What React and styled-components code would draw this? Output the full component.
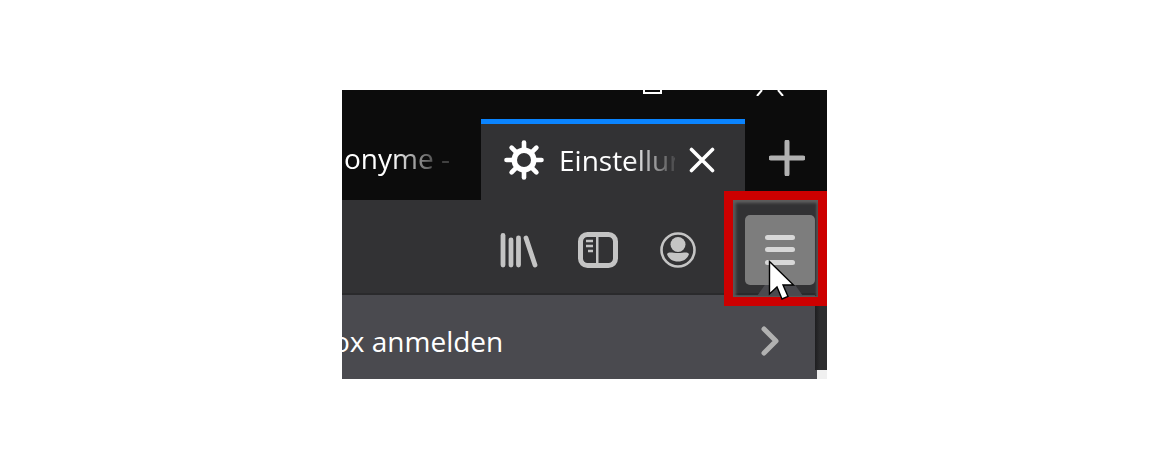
import React from "react";
import styled, { createGlobalStyle } from "styled-components";

const Global = createGlobalStyle`
  html, body { margin: 0; padding: 0; background: #fff; }
  body { font-family: "Open Sans", "Noto Sans", Arial, sans-serif; }
`;
const Page = styled.div`
  width: 1170px; height: 470px; display: flex; justify-content: flex-start;
  align-items: flex-start; padding: 90px 0 0 342px; box-sizing: border-box;
`;
const Frame = styled.div`
  position: relative; width: 485px; height: 289px; overflow: hidden;
  background: #0c0c0c; display: flex; flex-direction: column;
`;
const Caption = styled.div`
  height: 29px; flex: none; display: flex; align-items: flex-start; color: #fff;
  padding-left: 301px;
`;
const MaxGlyph = styled.div`
  width: 19px; height: 4px; box-sizing: border-box; margin-right: 95px;
  border: 2px solid #fff; border-top: 0;
`;
const TabStrip = styled.div`
  height: 81px; flex: none; display: flex; background: #0c0c0c;
`;
const InactiveTab = styled.div`
  width: 139px; flex: none; overflow: hidden; display: flex; justify-content: flex-end;
  align-items: center; padding: 0 31px 3px 0; box-sizing: border-box;
`;
const InactiveLabel = styled.span`
  font-size: 28px; color: #fff; white-space: nowrap; line-height: 76px;
  -webkit-mask-image: linear-gradient(90deg, #000 45%, rgba(0,0,0,.22) 88%);
  mask-image: linear-gradient(90deg, #000 45%, rgba(0,0,0,.22) 88%);
`;
const ActiveTab = styled.div`
  width: 264px; flex: none; box-sizing: border-box; background: #323234;
  border-top: 5px solid #0a84ff; display: flex; align-items: center; padding: 0 0 4px 23px;
`;
const TabLabel = styled.span`
  width: 116px; margin-left: 15px; overflow: hidden; white-space: nowrap;
  font-size: 28px; color: #fff; line-height: 72px; flex: none;
  -webkit-mask-image: linear-gradient(90deg, #000 62%, rgba(0,0,0,.15) 98%);
  mask-image: linear-gradient(90deg, #000 62%, rgba(0,0,0,.15) 98%);
`;
const TabClose = styled.svg`
  margin-left: 14px; flex: none;
`;
const NewTab = styled.div`
  flex: 1; display: flex; align-items: center; justify-content: center; padding: 0 0 4px 2px;
`;
const NavBar = styled.div`
  height: 95px; flex: none; background: #323234; box-sizing: border-box;
  border-bottom: 2px solid #2a2a2c; display: flex; align-items: center; justify-content: flex-end;
  padding: 6px 12px 0 0;
`;
const ToolIcon = styled.svg`
  flex: none; color: #c4c4c4; margin-right: ${p => p.$gap}px;
`;
const MenuButton = styled.div`
  width: 70px; height: 70px; border-radius: 5px; background: #7d7d7d;
  display: flex; flex-direction: column; align-items: center; justify-content: center; gap: 7.5px;
`;
const MenuLine = styled.span`
  width: 30px; height: 5px; border-radius: 3px; background: #d8d8d8;
`;
const Lower = styled.div`
  flex: 1; display: flex; min-height: 0;
`;
const Panel = styled.div`
  width: 473px; flex: none; background: #4a4a4f; display: flex; align-items: center;
  justify-content: space-between; box-sizing: border-box; padding: 0 36px 0 0;
  overflow: hidden;
`;
const PanelLabel = styled.span`
  font-size: 28px; color: #fff; white-space: nowrap; margin-left: -9px; margin-top: 7px;
`;
const Chevron = styled.svg`
  flex: none; margin-top: 8px;
`;
const Side = styled.div`
  flex: 1; display: flex; flex-direction: column;
`;
const SideDark = styled.div`
  height: 75px; flex: none; background: linear-gradient(90deg, #1e1e20 0, #2d2d2f 5px, #2d2d2f 100%);
`;
const SideLight = styled.div`
  flex: 1; background: linear-gradient(90deg, #4a4a4f 0 2px, #f0f0f0 2px);
`;
const Highlight = styled.div`
  position: absolute; left: 382px; top: 101px; width: 103px; height: 115px;
  box-sizing: border-box; border: 9px solid #cc0000;
  box-shadow: inset 0 4px 3px -1px #5e5e5e, inset 4px 0 3px -1px #585858,
    inset -3px 0 2px -1px #505050, inset 0 -2px 1px -1px #5a5a5a;
`;
const NotchArrow = styled.div`
  position: absolute; left: 415px; top: 195px; width: 46px; height: 11px;
  background: #4a4a4f; clip-path: polygon(17% 0, 83% 0, 100% 100%, 0 100%);
`;
const Cursor = styled.svg`
  position: absolute; left: 426px; top: 170px;
`;

const Gear = () => (
  <svg width="40" height="40" viewBox="0 0 40 40" style={{ flex: "none" }}>
    <g stroke="#fff" strokeWidth="4.6" strokeLinecap="round">
      <line x1="20" y1="2.5" x2="20" y2="37.5" />
      <line x1="2.5" y1="20" x2="37.5" y2="20" />
      <line x1="7.6" y1="7.6" x2="32.4" y2="32.4" />
      <line x1="32.4" y1="7.6" x2="7.6" y2="32.4" />
    </g>
    <circle cx="20" cy="20" r="12.5" fill="#fff" />
    <circle cx="20" cy="20" r="7" fill="#323234" />
  </svg>
);

export default function App() {
  return (
    <>
      <Global />
      <Page>
        <Frame>
          <Caption>
            <MaxGlyph />
            <svg width="28" height="6" viewBox="0 0 28 6" style={{ flex: "none", marginLeft: "-1px" }}>
              <path d="M1 6 L6 0 M27 6 L22 0" stroke="#fff" strokeWidth="2" fill="none" />
            </svg>
          </Caption>
          <TabStrip>
            <InactiveTab><InactiveLabel>onyme -</InactiveLabel></InactiveTab>
            <ActiveTab>
              <Gear />
              <TabLabel>Einstellungen</TabLabel>
              <TabClose width="26" height="26" viewBox="0 0 26 26">
                <path d="M2.5 2.5 L23.5 23.5 M23.5 2.5 L2.5 23.5" stroke="#fff" strokeWidth="3.6" strokeLinecap="round" />
              </TabClose>
            </ActiveTab>
            <NewTab>
              <svg width="36" height="36" viewBox="0 0 36 36">
                <path d="M18 2 V34 M2 18 H34" stroke="#b1b1b1" strokeWidth="5" strokeLinecap="round" />
              </svg>
            </NewTab>
          </TabStrip>
          <NavBar>
            <ToolIcon $gap={40} width="38" height="36" viewBox="0 0 38 36">
              <g stroke="currentColor" strokeWidth="4.8" strokeLinecap="round" fill="none">
                <path d="M3 3.5 V33" />
                <path d="M11 8 V33" />
                <path d="M18.5 6 V33" />
                <path d="M26 6 L35 33" />
              </g>
            </ToolIcon>
            <ToolIcon $gap={42} width="40" height="36" viewBox="0 0 40 36">
              <rect x="2.5" y="2.5" width="35" height="31" rx="7" fill="none" stroke="currentColor" strokeWidth="5" />
              <rect x="18" y="3" width="2.5" height="30" fill="currentColor" />
              <path d="M8 9 H15 M8 14 H15 M10 19 H15" stroke="currentColor" strokeWidth="2.4" />
            </ToolIcon>
            <ToolIcon $gap={49} width="36" height="36" viewBox="0 0 36 36">
              <circle cx="18" cy="18" r="16.5" fill="none" stroke="currentColor" strokeWidth="2.6" />
              <circle cx="18" cy="12.5" r="7.5" fill="currentColor" />
              <path d="M7 22 C9 19.5 12 21 18 21 C24 21 27 19.5 29 22 C27.5 27 23 29.5 18 29.5 C13 29.5 8.5 27 7 22 Z" fill="currentColor" />
            </ToolIcon>
            <MenuButton>
              <MenuLine /><MenuLine /><MenuLine />
            </MenuButton>
          </NavBar>
          <Lower>
            <Panel>
              <PanelLabel>ox anmelden</PanelLabel>
              <Chevron width="18" height="30" viewBox="0 0 18 30">
                <path d="M3 3 L15 15 L3 27" fill="none" stroke="#b1b1b1" strokeWidth="5" strokeLinecap="round" strokeLinejoin="round" />
              </Chevron>
            </Panel>
            <Side>
              <SideDark />
              <SideLight />
            </Side>
          </Lower>
          <NotchArrow />
          <Highlight />
          <Cursor width="28" height="42" viewBox="0 0 28 42">
            <path d="M1.5 1.5 V34 L9 27 L14 39 L20 36.5 L15 25 L25.5 25 Z" fill="#fff" stroke="#000" strokeWidth="1.4" strokeLinejoin="miter" />
          </Cursor>
        </Frame>
      </Page>
    </>
  );
}
